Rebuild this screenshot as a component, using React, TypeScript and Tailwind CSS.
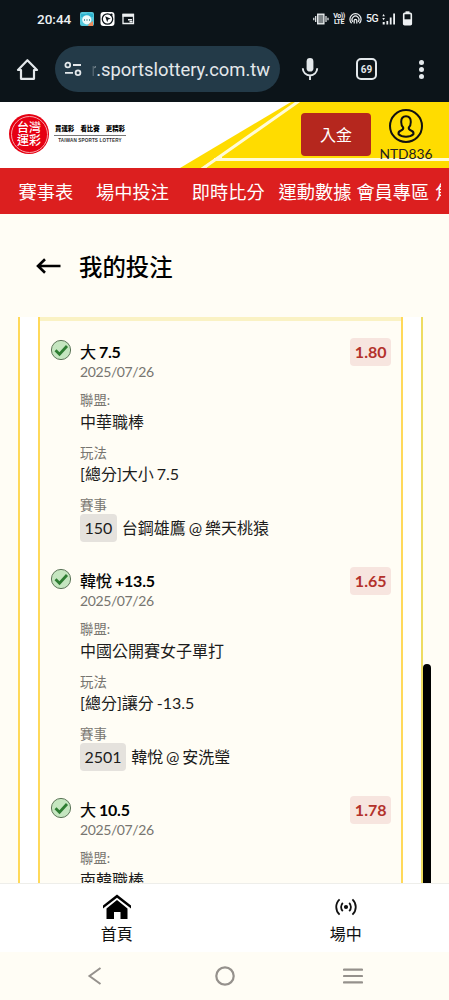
import React from "react";

interface Bet {
  id: string;
  pick: string;
  line: string;
  date: string;
  odds: string;
  league: string;
  market?: string;
  eventNo?: string;
  match?: string;
}

const bets: Bet[] = [
  {
    id: "bet_1",
    pick: "大",
    line: "7.5",
    date: "2025/07/26",
    odds: "1.80",
    league: "中華職棒",
    market: "[總分]大小 7.5",
    eventNo: "150",
    match: "台鋼雄鷹 @ 樂天桃猿",
  },
  {
    id: "bet_2",
    pick: "韓悅",
    line: "+13.5",
    date: "2025/07/26",
    odds: "1.65",
    league: "中國公開賽女子單打",
    market: "[總分]讓分 -13.5",
    eventNo: "2501",
    match: "韓悅 @ 安洗瑩",
  },
  {
    id: "bet_3",
    pick: "大",
    line: "10.5",
    date: "2025/07/26",
    odds: "1.78",
    league: "南韓職棒",
  },
];

const StatusBar = () => (
  <div className="flex h-[37px] items-center pl-[37px] pr-[36px] text-[#eef1f3]">
    <span className="w-[36px] whitespace-nowrap font-['Roboto',sans-serif] text-[13.5px] font-medium leading-4">
      20:44
    </span>
    <svg className="ml-[7px]" width="14" height="14" viewBox="0 0 14 14">
      <rect width="14" height="14" rx="2" fill="#55c8dc" />
      <path d="M1 2h5l2-1 5 1v3H1z" fill="#2eb3cf" />
      <circle cx="6.8" cy="7.8" r="4.6" fill="#eefafa" />
      <path d="M4 8h1M6.5 8h1M9 8h1" stroke="#317887" strokeWidth="1.4" />
      <path d="M9 12l4-3v5H8z" fill="#ef8a5c" />
    </svg>
    <svg className="ml-[6px]" width="15" height="14" viewBox="0 0 15 14">
      <rect x=".5" width="14" height="14" rx="3" fill="#fff" />
      <circle cx="7.5" cy="7" r="5.2" fill="none" stroke="#0c1419" strokeWidth="1.3" />
      <path d="M5.2 4.2l5.6 2.6-2.6.8-1 2.600z" fill="#0c1419" />
      <circle cx="11.4" cy="2.8" r="1.2" fill="#0c1419" />
    </svg>
    <svg className="ml-[7px]" width="13" height="12" viewBox="0 0 13 12" fill="none" stroke="currentColor">
      <path d="M1 1.5h10.5v9H1z" strokeWidth="1.3" />
      <path d="M.5 2.3h11.5" strokeWidth="3" />
      <path d="M6 6.800h4M7.500 8.800h3" strokeWidth="1.400" />
    </svg>
    <div className="ml-auto flex items-center">
      <svg width="16" height="12" viewBox="0 0 16 12" fill="none" stroke="currentColor">
        <rect x="4.7" y="1.2" width="6.2" height="9.6" strokeWidth="1.3" fill="#7c8386" />
        <path d="M2.7 3v6M13 3v6M.8 4.8v2.5M15 4.8v2.5" strokeWidth="1.2" />
      </svg>
      <span className="ml-[4px] w-[12px] text-center font-['Roboto',sans-serif] text-[7px] font-bold leading-[6px] tracking-[-0.4px]">
        Vo)) LTE
      </span>
      <svg className="ml-[4px]" width="13" height="12" viewBox="0 0 13 12" fill="none" stroke="currentColor" strokeWidth="1.2">
        <path d="M2.6 10.3a5.6 5.6 0 1 1 7.8 0" />
        <path d="M4 8.8a3.4 3.4 0 1 1 5 0" />
        <path d="M5.2 10.5V7.6a1.3 1.3 0 0 1 2.6 0v2.9" />
      </svg>
      <span className="ml-[4px] w-[13px] whitespace-nowrap font-['Roboto',sans-serif] text-[10.5px] font-medium leading-3 tracking-[-0.5px]">
        5G
      </span>
      <svg className="ml-[3px]" width="14" height="12" viewBox="0 0 14 12" fill="currentColor">
        <path d="M.3 3.2L1.6 1l1.3 2.2zM.3 5L1.6 7.2 2.9 5zM.7 9h2v2.6h-2zM4.4 8h1.8v3.6H4.4zM7.8 4.5h1.8v7.1H7.8zM11.2.5H13v11.1h-1.8z" />
      </svg>
      <svg className="ml-[6px]" width="11" height="15" viewBox="0 0 11 15">
        <path d="M3.5.3h4v2h-4z" fill="currentColor" />
        <rect x="1.7" y="2.4" width="7.6" height="11.4" rx="1" fill="none" stroke="currentColor" strokeWidth="1.6" />
        <path d="M1.7 8.3h7.6v5.5H1.7z" fill="currentColor" />
      </svg>
    </div>
  </div>
);

const BrowserBar = () => (
  <div className="flex h-[65px] items-center pb-[1px] text-[#e3e8eb]">
    <svg className="ml-[16px]" width="23" height="23" viewBox="0 0 23 23" fill="none" stroke="currentColor" strokeWidth="2.2" strokeLinejoin="round">
      <path d="M2 12L11.4 2.2 21 12h-3v8.8H5V12z" />
    </svg>
    <div className="ml-[16px] flex h-[46px] w-[225px] items-center overflow-hidden rounded-full bg-[#233a48]">
      <svg className="ml-[9px] shrink-0" width="18" height="16" viewBox="0 0 18 16" fill="none" stroke="currentColor" strokeWidth="1.8">
        <circle cx="3.8" cy="4" r="2.4" />
        <path d="M9 4h8M1 11.8h8" />
        <circle cx="14" cy="11.8" r="2.4" />
      </svg>
      <div className="ml-[9px] mt-[2px] w-[183px] whitespace-nowrap font-['Roboto',sans-serif] text-[18.4px] leading-6">
        <span className="bg-gradient-to-r from-[#233a48] to-[#8b989f] bg-clip-text text-transparent">r</span>
        .sportslottery.com.tw
      </div>
    </div>
    <svg className="ml-[21px]" width="18" height="24" viewBox="0 0 18 24" fill="none">
      <rect x="5.6" y="1" width="6.8" height="13.6" rx="3.4" fill="currentColor" />
      <path d="M1.8 11.3a7.2 7.2 0 0 0 14.4 0M9 18.5V23" stroke="currentColor" strokeWidth="1.9" />
    </svg>
    <div className="ml-[37px] flex h-[22px] w-[21px] items-center justify-center rounded-[5px] border-2 border-[#e3e8eb] font-['Roboto',sans-serif] text-[10px] font-bold">
      69
    </div>
    <div className="ml-[42px] flex flex-col gap-[2px]">
      <span className="size-[5px] rounded-full bg-[#e3e8eb]" />
      <span className="size-[5px] rounded-full bg-[#e3e8eb]" />
      <span className="size-[5px] rounded-full bg-[#e3e8eb]" />
    </div>
  </div>
);

const SiteHeader = () => (
  <header className="relative flex h-[66px] bg-white">
    <svg className="absolute inset-0" width="449" height="66" viewBox="0 0 449 66">
      <path d="M180 66L291 0H449V66z" fill="#ffdc00" />
      <path d="M202 67L299 -1M214 57.500H449" stroke="#fffbd8" strokeWidth="3" fill="none" />
      <path d="M201 66L222 52V56L214 59L206 66z" fill="#fffbd8" />
    </svg>
    <div className="relative flex w-full items-start">
      <div className="ml-[9px] mt-[12px] flex size-[40px] items-center justify-center rounded-full bg-[#e60012] p-[1.5px]">
        <div className="flex size-full flex-col items-center justify-center rounded-full border border-[#f7a3a8] text-[12px] font-medium text-white">
          <span className="h-[13px] leading-[13px]">台灣</span>
          <span className="h-[13px] leading-[13px]">運彩</span>
        </div>
      </div>
      <div className="ml-[5px] mt-[22px] w-[72px] whitespace-nowrap text-center">
        <div className="flex justify-between border-b border-[#777] px-px pb-[2px] text-[6.4px] font-black leading-[9px] text-black">
          <span>買運彩</span>
          <span>看比賽</span>
          <span>更精彩</span>
        </div>
        <div className="pt-[2px] font-['Liberation_Sans',sans-serif] text-[4.6px] font-bold leading-[6px] tracking-[0.15px] text-[#333]">
          TAIWAN SPORTS LOTTERY
        </div>
      </div>
      <button className="ml-[175px] mt-[11px] h-[43px] w-[70px] rounded-[4px] bg-[#b5271e] text-[16px] leading-6 text-white">
        入金
      </button>
      <div className="ml-[8px] mt-[6px] flex w-[54px] flex-col items-center">
        <svg width="36" height="36" viewBox="0 0 36 36" fill="none" stroke="#111" strokeWidth="2">
          <circle cx="18" cy="18" r="16" />
          <path d="M15.200 19.500c-1.600-1.600-2-3.600-2-5.600 0-3.400 1.900-5.600 4.800-5.600s4.800 2.200 4.800 5.600c0 2-.4 4-2 5.600-.6 2 1 2.600 2.600 3.200 1.800.7 2.400 1.900 2 3.500-2 1.900-4.400 2.500-7.400 2.500s-5.400-.6-7.400-2.500c-.4-1.600.2-2.800 2-3.500 1.600-.6 3.200-1.200 2.600-3.200z" />
        </svg>
        <span className="mt-[1px] text-[13.8px] leading-[18px] text-[#222]">NTD836</span>
      </div>
    </div>
  </header>
);

const MainNav = () => (
  <nav className="flex h-[46px] items-center whitespace-nowrap bg-[#dc1f1f] pl-[18.5px] pr-[8px] pt-px text-[18.2px] leading-6 text-white">
    <span className="mr-[23px]">賽事表</span>
    <span className="mr-[23px]">場中投注</span>
    <span className="mr-[14px]">即時比分</span>
    <span className="mr-[5px]">運動數據</span>
    <span className="mr-[6px]">會員專區</span>
    <span className="min-w-0 flex-1 overflow-hidden">焦</span>
  </nav>
);

const BetItem: React.FC<{ bet: Bet }> = ({ bet }) => (
  <div className="flex h-[229px] shrink-0 items-start pl-[10px] pr-[10px]">
    <svg className="-mt-[3px] shrink-0" width="22" height="22" viewBox="0 0 22 22">
      <circle cx="11" cy="11" r="9.6" fill="#c5e6c0" stroke="#5c7558" strokeWidth="1" />
      <path d="M5.5 11.3l4 4 7.5-8.3" fill="none" stroke="#2e7d32" strokeWidth="2.8" />
    </svg>
    <div className="ml-[8px] flex-1 whitespace-nowrap text-[16px] leading-[25px] text-[#1c1c1c] [word-spacing:-1.2px]">
      <p className="leading-5 text-black">
        <span className="[-webkit-text-stroke:0.2px_#000]">{bet.pick}</span>{" "}
        <b className="tracking-[-0.2px]">{bet.line}</b>
      </p>
      <p className="mb-[10px] text-[14px] leading-[19px] tracking-[-0.4px] text-[#777570]">{bet.date}</p>
      <p className="text-[13.4px] leading-[18px] text-[#777570]">聯盟:</p>
      <p className="mb-[10px]">{bet.league}</p>
      {bet.market && (
        <>
          <p className="text-[13.4px] leading-[18px] text-[#777570]">玩法</p>
          <p className="-mt-px mb-[10px]">{bet.market}</p>
        </>
      )}
      {bet.match && (
        <>
          <p className="text-[13.4px] leading-[18px] text-[#777570]">賽事</p>
          <div className="flex h-7 items-center">
            <span className="mr-[5px] rounded-[4px] bg-[#e5e2dd] px-[4.5px] leading-7">{bet.eventNo}</span>
            <span className="-mt-px">{bet.match}</span>
          </div>
        </>
      )}
    </div>
    <span className="-mt-[4px] rounded-[4px] bg-[#f7e5df] px-[4.5px] font-bold leading-7 text-[#b3312b]">
      {bet.odds}
    </span>
  </div>
);

const BetList = () => (
  <div className="relative h-[566px] pl-[18px] pr-[26px]">
    <div className="h-full border-x-2 border-l-[#ffd95a] border-r-[#eedc62] bg-white px-[18px]">
      <div className="flex h-full flex-col overflow-hidden border-x-2 border-[#ffd95a] bg-[#fffdf5]">
        <div className="mb-[21px] h-1 shrink-0 bg-[#faf2c4]" />
        {bets.map((bet) => (
          <BetItem key={bet.id} bet={bet} />
        ))}
      </div>
    </div>
    {/* scroll thumb */}
    <div className="absolute bottom-0 right-[18px] h-[219px] w-2 rounded-t-full bg-black" />
  </div>
);

const TabBar = () => (
  <div className="grid h-[69px] grid-cols-2 border-t border-[#eeeeea] bg-white text-[16px] leading-6 text-[#111]">
    <div className="flex flex-col items-center pl-[9px] pt-[10px]">
      <svg width="28" height="26" viewBox="0 0 28 26" fill="#000">
        <path d="M14 0.5L28 11.500v3L14 3.800 0 14.500v-3z" />
        <path d="M14 6L24.500 14.500v10.500H17.500v-7h-6.500v7H3.500V14.500z" />
      </svg>
      <span className="mt-[2px]">首頁</span>
    </div>
    <div className="flex flex-col items-center pl-[18px] pt-[14px]">
      <svg width="22" height="18" viewBox="0 0 22 18" fill="none" stroke="#111" strokeWidth="1.800">
        <circle cx="11" cy="9" r="1.2" fill="#111" />
        <path d="M7.800 4.800a6 6 0 0 0 0 8.400M14.200 4.800a6 6 0 0 1 0 8.400M4.600 1.300a10.500 10.500 0 0 0 0 15.400M17.400 1.300a10.500 10.500 0 0 1 0 15.400" />
      </svg>
      <span className="mt-[6px]">場中</span>
    </div>
  </div>
);

const SystemNav = () => (
  <div className="flex h-12 items-center bg-[#fffdf5] text-[#95918c]">
    <svg className="ml-[87px]" width="15" height="20" viewBox="0 0 15 20" fill="none" stroke="currentColor" strokeWidth="2">
      <path d="M13.500 2L2.500 10l11 8" />
    </svg>
    <svg className="ml-[112px]" width="22" height="22" viewBox="0 0 22 22" fill="none" stroke="currentColor" strokeWidth="2.2">
      <circle cx="11" cy="11" r="8.700" />
    </svg>
    <svg className="ml-[107px]" width="20" height="18" viewBox="0 0 20 18" stroke="currentColor" strokeWidth="2.2" strokeLinecap="round">
      <path d="M1 2.600h18M1 9h18M1 15.400h18" />
    </svg>
  </div>
);

export default function App() {
  return (
    <div className="flex h-[1000px] w-[449px] flex-col overflow-hidden bg-[#fffdf5] font-['Lato','Noto_Sans_CJK_TC',sans-serif]">
      <div className="h-[102px] bg-[#0c1419]">
        <StatusBar />
        <BrowserBar />
      </div>
      <SiteHeader />
      <MainNav />
      <div className="flex h-[103px] items-center pl-[36px]">
        <svg width="25" height="16" viewBox="0 0 25 16" fill="none" stroke="#000" strokeWidth="2.600">
          <path d="M24.500 8H2.500M9 1.200L2 8l7 6.800" />
        </svg>
        <h1 className="ml-[18px] mt-[2px] text-[23.4px] font-medium leading-8 text-black">我的投注</h1>
      </div>
      <BetList />
      <TabBar />
      <SystemNav />
    </div>
  );
}
